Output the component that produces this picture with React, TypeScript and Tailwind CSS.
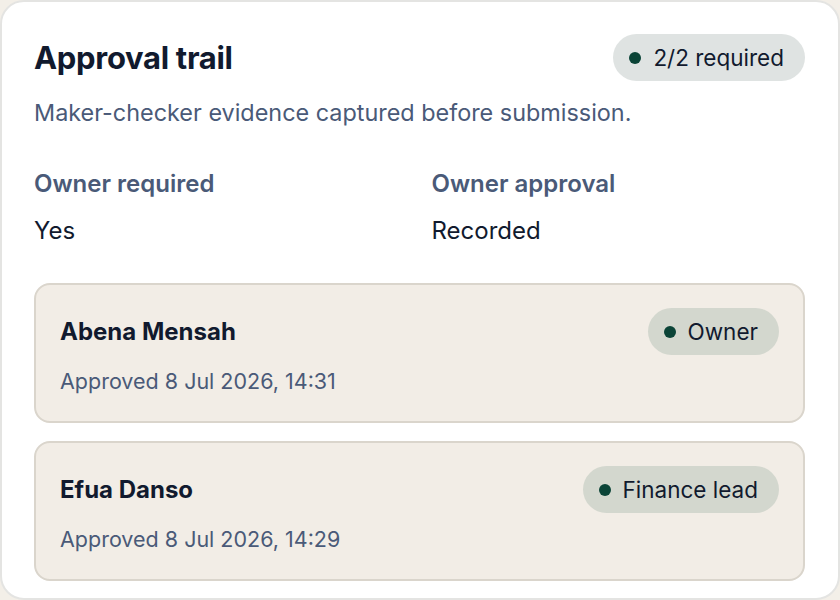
import React from 'react';

type Approver = { name: string; role: string; at: string };

const approvers: Approver[] = [
  { name: 'Abena Mensah', role: 'Owner', at: 'Approved 8 Jul 2026, 14:31' },
  { name: 'Efua Danso', role: 'Finance lead', at: 'Approved 8 Jul 2026, 14:29' },
];

function Pill({ label, tone }: { label: string; tone: 'soft' | 'sage' }) {
  return (
    <span
      className={
        'inline-flex items-center gap-[12px] rounded-full h-[47px] pl-[16px] pr-[21px] text-[22.5px] text-[#111a2e] ' +
        (tone === 'soft' ? 'bg-[#dfe3e2]' : 'bg-[#d3d7ce]')
      }
    >
      <span className="w-[12px] h-[12px] rounded-full bg-[#0b4437]" />
      {label}
    </span>
  );
}

export default function App() {
  return (
    <div className="w-[840px] h-[600px] bg-[#f3efe8] font-['Inter',sans-serif]">
      <div className="h-full bg-white border-2 border-[#e4e4e2] rounded-[24px] pl-[32px] pr-[33px] pt-[32px]">
        <div className="flex items-center justify-between">
          <h2 className="text-[31px] leading-[46px] font-bold tracking-[-0.3px] text-[#111a2e]">Approval trail</h2>
          <Pill label="2/2 required" tone="soft" />
        </div>
        <p className="mt-[16px] text-[23.4px] leading-[32px] text-[#4a5a78]">
          Maker-checker evidence captured before submission.
        </p>

        <div className="mt-[39px] grid grid-cols-2 gap-6">
          <div>
            <div className="text-[24px] leading-[32px] font-semibold text-[#4a5a78]">Owner required</div>
            <div className="mt-[15px] text-[24px] leading-[32px] text-[#111a2e]">Yes</div>
          </div>
          <div>
            <div className="text-[24px] leading-[32px] font-semibold text-[#4a5a78]">Owner approval</div>
            <div className="mt-[15px] text-[24px] leading-[32px] text-[#111a2e]">Recorded</div>
          </div>
        </div>

        <div className="mt-[36px] flex flex-col gap-[18px]">
          {approvers.map((a) => (
            <div
              key={a.name}
              className="h-[140px] rounded-[16px] border-2 border-[#dad5cc] bg-[#f2ede6] pl-[24px] pr-[24px] pt-[23px]"
            >
              <div className="flex items-center justify-between">
                <div className="text-[24px] font-bold text-[#111a2e]">{a.name}</div>
                <Pill label={a.role} tone="sage" />
              </div>
              <div className="mt-[10px] text-[21.5px] leading-[32px] text-[#4a5a78]">{a.at}</div>
            </div>
          ))}
        </div>
      </div>
    </div>
  );
}
